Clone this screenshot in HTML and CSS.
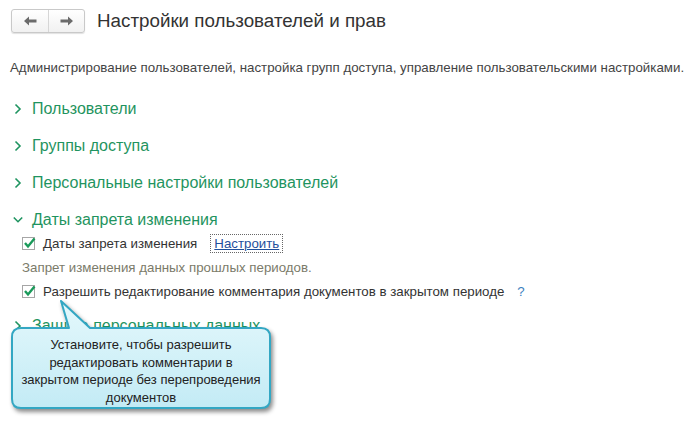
FILE: index.html
```html
<!DOCTYPE html>
<html lang="ru">
<head>
<meta charset="utf-8">
<title>Настройки пользователей и прав</title>
<link rel="stylesheet" href="styles.css">
</head>
<body>
<div class="page">
  <div class="header">
    <div class="nav">
      <button class="nav-btn" aria-label="Назад">
        <svg width="13" height="10" viewBox="0 0 13 10"><path d="M0 5 L5 0.5 V3.6 H12.5 V6.4 H5 V9.5 Z" fill="#6b6b6b"/></svg>
      </button>
      <button class="nav-btn" aria-label="Вперёд">
        <svg width="13" height="10" viewBox="0 0 13 10"><path d="M13 5 L8 0.5 V3.6 H0.5 V6.4 H8 V9.5 Z" fill="#6b6b6b"/></svg>
      </button>
    </div>
    <h1 class="title">Настройки пользователей и прав</h1>
  </div>

  <p class="desc">Администрирование пользователей, настройка групп доступа, управление пользовательскими настройками.</p>

  <div class="sections">
    <div class="section">
      <svg class="chev" width="10" height="12" viewBox="0 0 10 12"><path d="M2.5 1.5 L7 6 L2.5 10.5" fill="none" stroke="#1f9460" stroke-width="1.6"/></svg>
      <span>Пользователи</span>
    </div>
    <div class="section">
      <svg class="chev" width="10" height="12" viewBox="0 0 10 12"><path d="M2.5 1.5 L7 6 L2.5 10.5" fill="none" stroke="#1f9460" stroke-width="1.6"/></svg>
      <span>Группы доступа</span>
    </div>
    <div class="section">
      <svg class="chev" width="10" height="12" viewBox="0 0 10 12"><path d="M2.5 1.5 L7 6 L2.5 10.5" fill="none" stroke="#1f9460" stroke-width="1.6"/></svg>
      <span>Персональные настройки пользователей</span>
    </div>
    <div class="section">
      <svg class="chev" width="10" height="12" viewBox="0 0 10 12"><path d="M0.8 3.5 L5 7.7 L9.2 3.5" fill="none" stroke="#1f9460" stroke-width="1.6"/></svg>
      <span>Даты запрета изменения</span>
    </div>
    <div class="section-body">
      <div class="row">
        <span class="checkbox"><svg width="13" height="12" viewBox="0 0 13 12"><path d="M2 6 L5 9.5 L11.5 1.5" fill="none" stroke="#1a9a5a" stroke-width="2.4"/></svg></span>
        <span class="label">Даты запрета изменения</span>
        <a class="link" href="#">Настроить</a>
      </div>
      <div class="row note">Запрет изменения данных прошлых периодов.</div>
      <div class="row">
        <span class="checkbox"><svg width="13" height="12" viewBox="0 0 13 12"><path d="M2 6 L5 9.5 L11.5 1.5" fill="none" stroke="#1a9a5a" stroke-width="2.4"/></svg></span>
        <span class="label">Разрешить редактирование комментария документов в закрытом периоде</span>
        <span class="help">?</span>
      </div>
    </div>
    <div class="section last">
      <svg class="chev" width="10" height="12" viewBox="0 0 10 12"><path d="M2.5 1.5 L7 6 L2.5 10.5" fill="none" stroke="#1f9460" stroke-width="1.6"/></svg>
      <span>Защита персональных данных</span>
    </div>
  </div>

  <div class="callout">
    <svg class="callout-shape" width="266" height="116" viewBox="0 0 266 116">
      <defs>
        <linearGradient id="cg" x1="0" y1="0" x2="0" y2="1">
          <stop offset="0" stop-color="#e4f8fc"/>
          <stop offset="1" stop-color="#c3ebf5"/>
        </linearGradient>
      </defs>
      <path d="M11 30 H59 L51 3 L80 30 H251 Q260 30 260 39 V101 Q260 110 251 110 H11 Q2 110 2 101 V39 Q2 30 11 30 Z" fill="url(#cg)" stroke="#33a7c3" stroke-width="2" stroke-linejoin="round"/>
    </svg>
    <div class="callout-text">Установите, чтобы разрешить<br>редактировать комментарии в<br>закрытом периоде без перепроведения<br>документов</div>
  </div>
</div>
</body>
</html>
```

FILE: styles.css
```css
html, body {
  margin: 0;
  padding: 0;
  background: #ffffff;
}

body {
  font-family: "Liberation Sans", Arial, sans-serif;
  color: #333333;
  width: 700px;
  height: 424px;
  overflow: hidden;
}

.page {
  position: relative;
  width: 700px;
  height: 424px;
}

.header {
  display: flex;
  align-items: center;
  gap: 12px;
  padding: 9px 0 0 11px;
  height: 24px;
}

.nav {
  display: flex;
  height: 24px;
  border: 1px solid #c9c9c9;
  border-radius: 3px;
  box-shadow: 0 1px 1px rgba(0, 0, 0, 0.12);
  background: linear-gradient(#ffffff, #f1f1f1);
  box-sizing: border-box;
}

.nav-btn {
  width: 36px;
  height: 22px;
  padding: 0;
  margin: 0;
  border: none;
  background: transparent;
  display: flex;
  align-items: center;
  justify-content: center;
}

.nav-btn + .nav-btn {
  border-left: 1px solid #d6d6d6;
}

.title {
  margin: 0;
  font-size: 18.8px;
  font-weight: normal;
  color: #333333;
  line-height: 24px;
}

.desc {
  margin: 27px 0 0 10px;
  font-size: 13.3px;
  line-height: 16px;
  color: #444444;
  white-space: nowrap;
}

.sections {
  margin-top: 21px;
}

.section {
  display: flex;
  align-items: center;
  gap: 9px;
  height: 24px;
  padding-left: 13px;
  font-size: 16px;
  color: #1f9460;
}

.section + .section {
  margin-top: 13px;
}

.section-body {
  margin-top: -1px;
  padding-left: 22px;
}

.section-body + .section {
  margin-top: 11px;
}

.chev {
  flex: none;
}

.row {
  display: flex;
  align-items: center;
  height: 24px;
  font-size: 13.3px;
  color: #333333;
}

.checkbox {
  flex: none;
  width: 13px;
  height: 13px;
  border: 1px solid #a6a6a6;
  background: #ffffff;
  box-sizing: border-box;
  position: relative;
  margin-right: 8px;
}

.checkbox svg {
  position: absolute;
  left: 0;
  top: -1px;
}

.label {
  white-space: nowrap;
}

.link {
  margin-left: 15px;
  color: #1f4f9c;
  text-decoration: underline;
  outline: 1px dotted #666666;
  outline-offset: 1px;
  padding: 0 2px;
}

.note {
  color: #7b7b6a;
}

.help {
  margin-left: 13px;
  color: #3b7fc0;
  font-size: 13.3px;
}

.callout {
  position: absolute;
  left: 10px;
  top: 298px;
  width: 266px;
  height: 116px;
}

.callout-shape {
  display: block;
  filter: drop-shadow(2px 3px 2px rgba(0, 0, 0, 0.45));
}

.callout-text {
  position: absolute;
  left: 2px;
  top: 38px;
  width: 258px;
  text-align: center;
  font-size: 13px;
  line-height: 17.5px;
  color: #222222;
}
```
